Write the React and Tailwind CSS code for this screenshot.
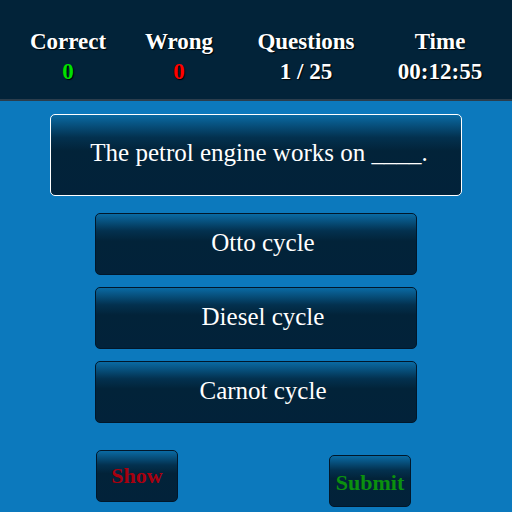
const STATS = [
  { label: 'Correct', value: '0', color: 'text-[#00e000]', width: 'w-[136px]' },
  { label: 'Wrong', value: '0', color: 'text-[#ff0000]', width: 'w-[86px]' },
  { label: 'Questions', value: '1 / 25', color: 'text-white', width: 'w-[168px]' },
  { label: 'Time', value: '00:12:55', color: 'text-white', width: 'w-[100px]' },
];

const OPTIONS = ['Otto cycle', 'Diesel cycle', 'Carnot cycle'];

const panel = 'bg-[linear-gradient(to_bottom,#0a6aa3_0%,#03314f_28%,#022339_45%,#02223a_100%)]';

export default function App() {
  return (
    <div className="flex h-[512px] w-[512px] flex-col overflow-hidden bg-[#0c79bd] font-['Liberation_Serif']">
      <div className="flex h-[101px] shrink-0 items-start border-b-2 border-[#2b3d4c] bg-[#022339] pt-[27px] [text-shadow:1px_1px_1px_#000]">
        {STATS.map((s) => (
          <div key={s.label} className={`${s.width} flex flex-col items-center font-bold`}>
            <span className="text-[23px] leading-[30px] text-white">{s.label}</span>
            <span className={`text-[23px] leading-[30px] ${s.color}`}>{s.value}</span>
          </div>
        ))}
      </div>

      <div className={`mx-[50px] mt-[13px] flex h-[82px] items-center justify-center rounded-[5px] border border-white pb-[4px] pl-[6px] ${panel}`}>
        <span className="text-[25px] text-white">The petrol engine works on ____.</span>
      </div>

      <div className="mt-[17px] flex flex-col gap-[12px] px-[95px]">
        {OPTIONS.map((o) => (
          <button
            key={o}
            className={`flex h-[62px] items-center justify-center rounded-[5px] border border-[#01172a] pb-[2px] pl-[14px] text-[25px] text-white ${panel}`}
          >
            {o}
          </button>
        ))}
      </div>

      <div className="flex items-start justify-between pl-[96px] pr-[101px] pt-[27px]">
        <button className={`flex h-[52px] w-[82px] items-center justify-center rounded-[5px] border border-[#01172a] pb-[2px] text-[22px] font-bold text-[#a8000f] ${panel}`}>
          Show
        </button>
        <button className={`mt-[5px] flex h-[52px] w-[82px] items-center justify-center rounded-[5px] border border-[#01172a] pt-[2px] text-[22px] font-bold text-[#0b900e] ${panel}`}>
          Submit
        </button>
      </div>
    </div>
  );
}
